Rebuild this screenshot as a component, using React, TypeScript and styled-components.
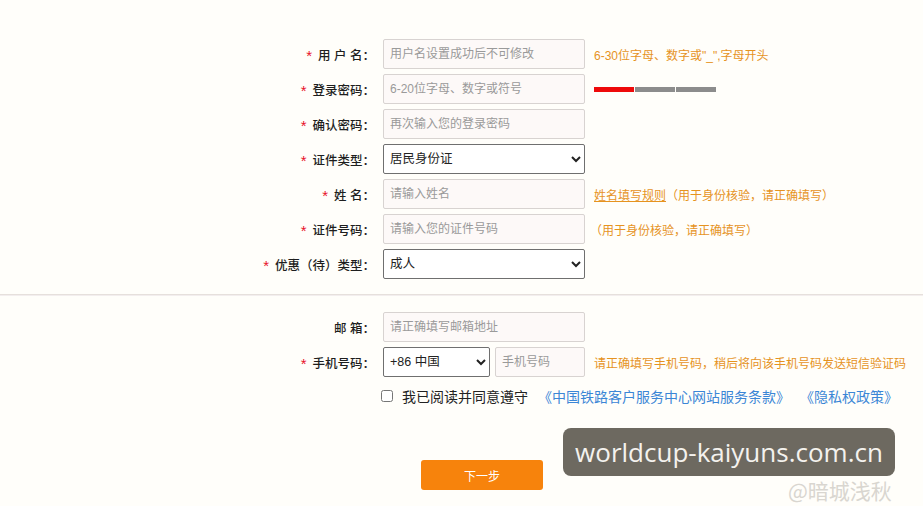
import styled, { createGlobalStyle } from "styled-components";

const GlobalStyle = createGlobalStyle`
  html, body {
    margin: 0;
    padding: 0;
    background: #fffefa;
    font-family: "Liberation Sans", "Noto Sans CJK SC", sans-serif;
    color: #333;
  }
`;

const Page = styled.div`
  position: relative;
  width: 923px;
  height: 506px;
  overflow: hidden;
`;

const Section = styled.div<{ $top: number }>`
  padding-top: ${(p) => p.$top}px;
`;

const Row = styled.div`
  display: flex;
  align-items: center;
  height: 30px;
  margin-bottom: 5px;
`;

const Label = styled.label`
  width: 375px;
  text-align: right;
  font-size: 12.5px;
  color: #1e1e1e;
  font-weight: 500;
  white-space: nowrap;
`;

const Star = styled.span`
  color: #e8132a;
  font-size: 15px;
  margin-right: 6px;
  vertical-align: -1px;
`;

const Input = styled.input<{ $w?: number; $gap?: number }>`
  box-sizing: border-box;
  margin-left: ${(p) => p.$gap ?? 8}px;
  width: ${(p) => p.$w ?? 202}px;
  height: 30px;
  padding: 0 6px;
  border: 1px solid #d8d3d1;
  border-radius: 2px;
  background: #fdf9f8;
  font-family: inherit;
  font-size: 12px;
  &::placeholder {
    color: #9a9a9a;
  }
`;

const Select = styled.select<{ $w?: number }>`
  box-sizing: border-box;
  margin-left: 8px;
  width: ${(p) => p.$w ?? 202}px;
  height: 30px;
  padding: 0 2px;
  border: 1px solid #6f6f6f;
  border-radius: 2px;
  background: #fff;
  color: #222;
  font-family: inherit;
  font-size: 12.5px;
`;

const Hint = styled.span<{ $gap?: number }>`
  margin-left: ${(p) => p.$gap ?? 9}px;
  font-size: 12px;
  color: #e6931f;
  white-space: nowrap;
`;

const HintLink = styled.a`
  color: #e6931f;
  text-decoration: underline;
`;

const Strength = styled.div`
  display: flex;
  gap: 1px;
  margin-left: 9px;
`;

const Bar = styled.div<{ $on?: boolean }>`
  width: 40px;
  height: 5px;
  background: ${(p) => (p.$on ? "#ee0a0a" : "#8c8c8c")};
`;

const Divider = styled.hr`
  margin: 15px 0 0;
  border: none;
  border-top: 1px solid #e6e0dc;
  box-shadow: 0 1px 0 #f3eeee;
`;

const AgreeRow = styled.div`
  display: flex;
  align-items: center;
  margin-left: 379px;
  margin-top: 9px;
  font-size: 14px;
  color: #222;
  white-space: nowrap;
`;

const Check = styled.input`
  width: 12px;
  height: 12px;
  margin: 0 9px 0 2px;
`;

const Terms = styled.a`
  color: #3b86d6;
  text-decoration: none;
  margin-left: 10px;
`;

const NextButton = styled.button`
  display: block;
  margin: 54px 0 0 421px;
  width: 122px;
  height: 30px;
  border: none;
  border-radius: 3px;
  background: #f7830c;
  color: #fff;
  font-family: inherit;
  font-size: 12px;
`;

const Overlay = styled.div`
  position: absolute;
  z-index: 2;
  left: 563px;
  top: 428px;
  width: 332px;
  height: 48px;
  border-radius: 8px;
  background: #6d6960;
  color: #f4f2ee;
  font-family: "Open Sans", "DejaVu Sans", sans-serif;
  font-size: 26px;
  display: flex;
  align-items: center;
  justify-content: center;
`;

const Mark = styled.div`
  position: absolute;
  z-index: 1;
  left: 788px;
  top: 477px;
  font-size: 21px;
  line-height: 26px;
  color: #d9d6d0;
  font-family: "Noto Sans CJK SC", sans-serif;
  white-space: nowrap;
`;

type Field = {
  label: string;
  required?: boolean;
  kind: "input" | "select";
  value: string;
  hint?: React.ReactNode;
};

const fields: Field[] = [
  {
    label: "用 户 名：",
    required: true,
    kind: "input",
    value: "用户名设置成功后不可修改",
    hint: <Hint>6-30位字母、数字或"_",字母开头</Hint>,
  },
  {
    label: "登录密码：",
    required: true,
    kind: "input",
    value: "6-20位字母、数字或符号",
    hint: (
      <Strength>
        <Bar $on />
        <Bar />
        <Bar />
      </Strength>
    ),
  },
  { label: "确认密码：", required: true, kind: "input", value: "再次输入您的登录密码" },
  { label: "证件类型：", required: true, kind: "select", value: "居民身份证" },
  {
    label: "姓 名：",
    required: true,
    kind: "input",
    value: "请输入姓名",
    hint: (
      <Hint>
        <HintLink>姓名填写规则</HintLink>（用于身份核验，请正确填写）
      </Hint>
    ),
  },
  {
    label: "证件号码：",
    required: true,
    kind: "input",
    value: "请输入您的证件号码",
    hint: <Hint $gap={5}>（用于身份核验，请正确填写）</Hint>,
  },
  { label: "优惠（待）类型：", required: true, kind: "select", value: "成人" },
];

function FieldRow({ f }: { f: Field }) {
  return (
    <Row>
      <Label>
        {f.required && <Star>*</Star>}
        {f.label}
      </Label>
      {f.kind === "input" ? (
        <Input placeholder={f.value} />
      ) : (
        <Select defaultValue={f.value}>
          <option>{f.value}</option>
        </Select>
      )}
      {f.hint}
    </Row>
  );
}

export default function App() {
  return (
    <Page>
      <GlobalStyle />
      <Section $top={39}>
        {fields.map((f) => (
          <FieldRow key={f.label} f={f} />
        ))}
      </Section>
      <Divider />
      <Section $top={17}>
        <Row>
          <Label>邮 箱：</Label>
          <Input placeholder="请正确填写邮箱地址" />
        </Row>
        <Row>
          <Label>
            <Star>*</Star>手机号码：
          </Label>
          <Select $w={107} defaultValue="+86 中国">
            <option>+86 中国</option>
          </Select>
          <Input $w={90} $gap={5} placeholder="手机号码" />
          <Hint>请正确填写手机号码，稍后将向该手机号码发送短信验证码</Hint>
        </Row>
        <AgreeRow>
          <Check type="checkbox" />
          我已阅读并同意遵守
          <Terms>《中国铁路客户服务中心网站服务条款》</Terms>
          <Terms>《隐私权政策》</Terms>
        </AgreeRow>
        <NextButton>下一步</NextButton>
      </Section>
      <Overlay>worldcup-kaiyuns.com.cn</Overlay>
      <Mark>@暗城浅秋</Mark>
    </Page>
  );
}
